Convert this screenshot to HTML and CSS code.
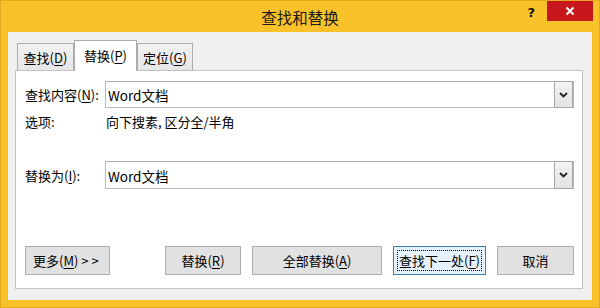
FILE: index.html
```html
<!DOCTYPE html>
<html lang="zh">
<head>
<meta charset="utf-8">
<title>查找和替换</title>
<link rel="stylesheet" href="styles.css">
</head>
<body>
<div class="window">
  <div class="titlebar">
    <div></div>
    <div class="title">查找和替换</div>
    <div class="controls">
      <span class="help">?</span>
      <span class="close"><svg width="10" height="10" viewBox="0 0 10 10"><path d="M1.5 1.5 L8.5 8.5 M8.5 1.5 L1.5 8.5" stroke="#fff" stroke-width="2"/></svg></span>
    </div>
  </div>
  <div class="client">
    <div class="tabs">
      <div class="tab t1">查找(<u>D</u>)</div>
      <div class="tab active t2">替换(<u>P</u>)</div>
      <div class="tab t3">定位(<u>G</u>)</div>
    </div>
    <div class="panel">
      <div class="row first">
        <div class="label">查找内容(<u>N</u>):</div>
        <div class="combo">
          <span class="value">Word文档</span>
          <span class="drop"><svg width="9" height="6" viewBox="0 0 9 6"><path d="M1 1 L4.5 4.5 L8 1" fill="none" stroke="#222" stroke-width="1.8"/></svg></span>
        </div>
      </div>
      <div class="row opts">
        <div class="label">选项:</div>
        <div class="optval">向下搜素, 区分全/半角</div>
      </div>
      <div class="row third">
        <div class="label">替换为(<u>I</u>):</div>
        <div class="combo">
          <span class="value">Word文档</span>
          <span class="drop"><svg width="9" height="6" viewBox="0 0 9 6"><path d="M1 1 L4.5 4.5 L8 1" fill="none" stroke="#222" stroke-width="1.8"/></svg></span>
        </div>
      </div>
      <div class="buttons">
        <button class="btn more">更多(<u>M</u>) &gt; &gt;</button>
        <div class="group">
          <button class="btn b-replace">替换(<u>R</u>)</button>
          <button class="btn b-all">全部替换(<u>A</u>)</button>
          <button class="btn b-next focus"><span class="focusring">查找下一处(<u>F</u>)</span></button>
          <button class="btn b-cancel">取消</button>
        </div>
      </div>
    </div>
  </div>
</div>
</body>
</html>
```

FILE: styles.css
```css
* { box-sizing: border-box; }
html, body { margin: 0; padding: 0; }
body {
  width: 600px;
  height: 308px;
  overflow: hidden;
  font-family: "Noto Sans CJK SC", "Noto Sans", sans-serif;
  font-size: 13px;
  color: #000;
}
u { text-decoration: underline; text-underline-offset: 2px; }

.window {
  width: 600px;
  height: 308px;
  background: #f9c22b;
  border: 1px solid #e3a91e;
  display: flex;
  flex-direction: column;
}

.titlebar {
  height: 31px;
  display: grid;
  grid-template-columns: 1fr auto 1fr;
  align-items: start;
}
.title {
  font-size: 15.5px;
  line-height: 16px;
  padding-top: 8px;
  color: #1a1a1a;
}
.controls {
  display: flex;
  justify-content: flex-end;
  align-items: flex-start;
  padding-right: 6px;
}
.help {
  font-family: "DejaVu Sans", sans-serif;
  font-weight: bold;
  font-size: 13px;
  line-height: 13px;
  margin-top: 5px;
  margin-right: 12px;
  color: #111;
}
.close {
  width: 46px;
  height: 20px;
  background: #c8161d;
  display: flex;
  align-items: center;
  justify-content: center;
}

.client {
  flex: 1;
  margin: 0 7px 7px 7px;
  background: #f0f0f0;
  padding: 9px 9px 11px 7px;
  display: flex;
  flex-direction: column;
}

.tabs {
  height: 29px;
  display: flex;
  align-items: flex-end;
  padding-left: 2px;
  position: relative;
  z-index: 1;
}
.tab {
  height: 27px;
  border: 1px solid #acacac;
  border-bottom: none;
  background: linear-gradient(#f2f2f2, #e6e6e6);
  display: flex;
  align-items: center;
  justify-content: center;
  line-height: 1;
  padding-top: 1px;
}
.t1 { width: 57px; }
.t2 { width: 63px; }
.t3 { width: 56px; }
.tab.active {
  height: 31px;
  margin-bottom: -1px;
  background: #fff;
  padding-bottom: 2px;
}

.panel {
  flex: 1;
  background: #fff;
  border: 1px solid #c3c3c3;
  padding: 10px 7px 13px 9px;
  display: flex;
  flex-direction: column;
}

.row {
  display: flex;
  align-items: center;
}
.label { width: 80px; flex: none; }
.row.first { height: 27px; }
.row.opts { height: 18px; margin-top: 4px; }
.row.third { height: 28px; margin-top: 31px; }

.combo {
  flex: 1;
  height: 100%;
  border: 1px solid #b9b9b9;
  border-top-color: #a8a8a8;
  display: flex;
  align-items: center;
  margin-right: 1px;
}
.value {
  flex: 1;
  padding-left: 2px;
  padding-top: 1px;
  font-size: 13.5px;
}
.drop {
  width: 19px;
  align-self: stretch;
  margin: -1px 0 -1px 0;
  border: 1px solid #a6a6a6;
  background: linear-gradient(#f3f3f3, #e3e3e3);
  display: flex;
  align-items: center;
  justify-content: center;
}
.optval { padding-left: 1px; }

.buttons {
  margin-top: auto;
  display: flex;
  height: 29px;
}
.group {
  margin-left: auto;
  display: flex;
  gap: 11px;
  margin-right: 1px;
}
.btn {
  font-family: inherit;
  font-size: 13px;
  color: #000;
  height: 29px;
  border: 1px solid #adadad;
  background: #e1e1e1;
  padding: 0;
  display: flex;
  align-items: center;
  justify-content: center;
  line-height: 1;
}
.more { width: 85px; justify-content: flex-start; padding-left: 7px; }
.b-replace { width: 76px; }
.b-all { width: 130px; }
.b-next { width: 93px; border-color: #3c7fb1; background: #e5f1fb; }
.b-cancel { width: 77px; }
.focusring {
  border: 1px dotted #000;
  width: calc(100% - 6px);
  height: calc(100% - 6px);
  display: flex;
  align-items: center;
  justify-content: center;
}
```
